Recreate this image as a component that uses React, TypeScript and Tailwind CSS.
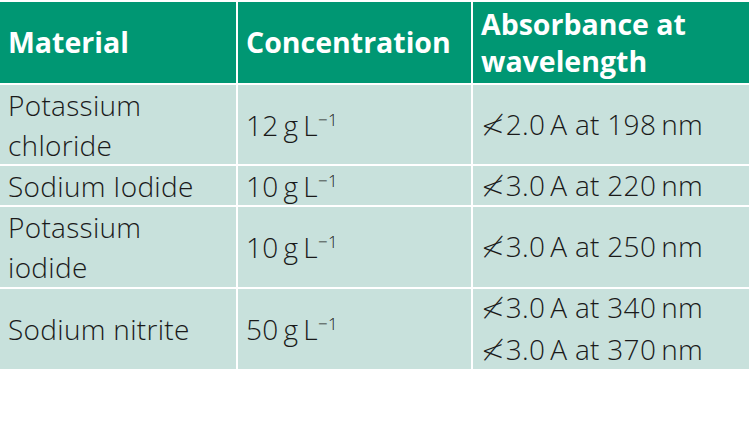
import React from "react";

const T = "\u2009";

function Conc({ n }: { n: string }) {
  return (
    <span>
      {n}
      {T}g{T}L<span className="inline-block align-top text-[17px] leading-[17px] mt-[6px]">−1</span>
    </span>
  );
}

function NotLess() {
  return (
    <span className="font-extralight mr-[1px]" style={{ fontFamily: '"DejaVu Sans", sans-serif' }}>
      ≮
    </span>
  );
}

function Abs({ a, nm }: { a: string; nm: string }) {
  return (
    <div className="whitespace-nowrap">
      <NotLess />
      {a}
      {T}A at {nm}
      {T}nm
    </div>
  );
}

export default function App() {
  const head =
    "bg-[#009773] text-white font-bold text-[28.5px] leading-[37px] flex items-center px-[8px]";
  const cell =
    "bg-[#c8e1dc] text-[#1a1a1a] font-light text-[28px] leading-[40px] flex items-center px-[8px] tracking-[0.3px]";
  return (
    <div className="w-[752px] h-[442px] bg-white pt-[2px]" style={{ fontFamily: '"Open Sans", sans-serif' }}>
      <div className="grid w-[749px] grid-cols-[236px_233px_276px] grid-rows-[81px_79px_39px_80px_80px] gap-[2px]">
        <div className={head}>Material</div>
        <div className={head + " px-[6px]"}>Concentration</div>
        <div className={head + " px-[6px]"}>
          Absorbance at
          <br />
          wavelength
        </div>

        <div className={cell}>
          Potassium
          <br />
          chloride
        </div>
        <div className={cell}>
          <Conc n="12" />
        </div>
        <div className={cell + " px-[6px]"}>
          <Abs a="2.0" nm="198" />
        </div>

        <div className={cell}>Sodium Iodide</div>
        <div className={cell}>
          <Conc n="10" />
        </div>
        <div className={cell + " px-[6px]"}>
          <Abs a="3.0" nm="220" />
        </div>

        <div className={cell}>
          Potassium
          <br />
          iodide
        </div>
        <div className={cell}>
          <Conc n="10" />
        </div>
        <div className={cell + " px-[6px]"}>
          <Abs a="3.0" nm="250" />
        </div>

        <div className={cell}>Sodium nitrite</div>
        <div className={cell}>
          <Conc n="50" />
        </div>
        <div className={cell + " px-[6px] flex-col items-start justify-center"}>
          <Abs a="3.0" nm="340" />
          <Abs a="3.0" nm="370" />
        </div>
      </div>
    </div>
  );
}
